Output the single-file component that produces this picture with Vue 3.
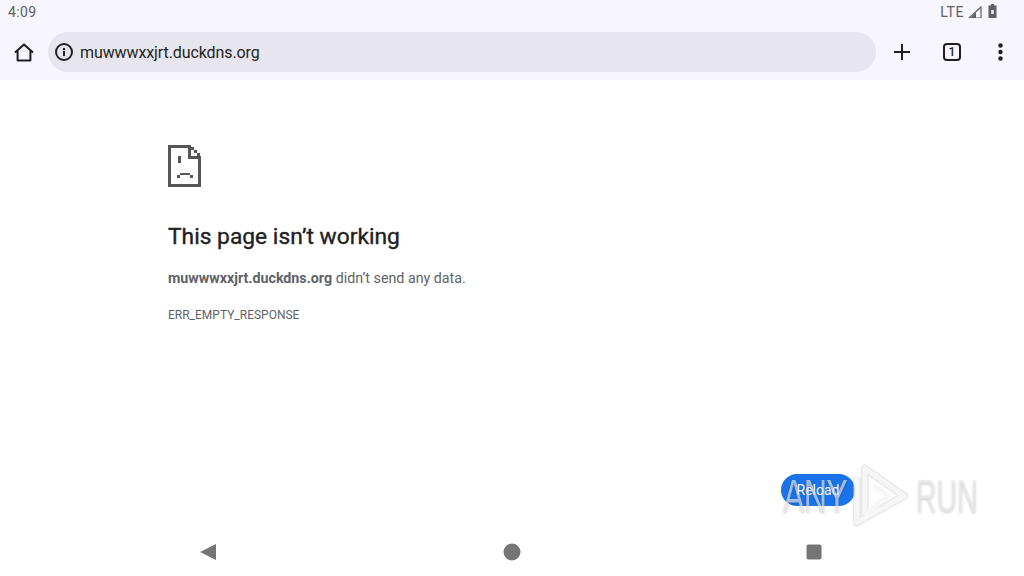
<script setup>
const host = 'muwwwxxjrt.duckdns.org'
</script>

<template>
  <div class="screen">
    <header class="chrome">
      <div class="status">
        <span class="time">4:09</span>
        <div class="status-right">
          <span class="lte">LTE</span>
          <svg width="14" height="12" viewBox="0 0 14 12"><path d="M13 1V12H1Z" fill="none" stroke="#5f6066" stroke-width="1.2"/><path d="M8 6V12H2.5L8 6Z" fill="#5f6066"/></svg>
          <svg class="battery" width="9" height="14" viewBox="0 0 9 14"><path d="M3 0H6V1.5H8.5V14H.5V1.5H3Z" fill="#5f6066"/><path d="M3.2 6H5.8V10H3.2Z" fill="#e8e8ee"/></svg>
        </div>
      </div>
      <div class="toolbar">
        <button class="tool home" aria-label="Home">
          <svg width="24" height="24" viewBox="0 0 24 24"><path d="M3 12.5 12 4.4l9 8.1M5.6 10.4V20.4H18.4V10.4" fill="none" stroke="#1f1f24" stroke-width="2" stroke-linejoin="round"/></svg>
        </button>
        <div class="omnibox">
          <svg width="20" height="20" viewBox="0 0 20 20"><circle cx="10" cy="10" r="8" fill="none" stroke="#1f1f24" stroke-width="2"/><rect x="9" y="9" width="2" height="5" fill="#1f1f24"/><rect x="9" y="6" width="2" height="2" fill="#1f1f24"/></svg>
          <span class="url">{{ host }}</span>
        </div>
        <div class="actions">
          <svg class="plus" width="18" height="18" viewBox="0 0 18 18"><path d="M9 1V17M1 9H17" stroke="#1f1f24" stroke-width="2"/></svg>
          <div class="tabs">1</div>
          <svg class="more" width="5" height="18" viewBox="0 0 5 18"><circle cx="2.5" cy="2.5" r="2.2" fill="#1f1f24"/><circle cx="2.5" cy="9" r="2.2" fill="#1f1f24"/><circle cx="2.5" cy="15.5" r="2.2" fill="#1f1f24"/></svg>
        </div>
      </div>
    </header>

    <main class="page">
      <svg class="sad" width="34" height="44" viewBox="0 0 34 44" shape-rendering="crispEdges" fill="#55565a">
        <path d="M0 1H22V4H3V40H30V14H33V43H0Z"/>
        <path d="M20 1H23V12H33V15H20Z"/>
        <path d="M23 3H26V6H23ZM26 6H29V9H26ZM29 9H32V12H29Z"/>
        <path d="M10 12H13V19H10Z"/>
        <path d="M12 29H22V31H12ZM9 31H12V34H9ZM22 31H25V34H22Z"/>
      </svg>
      <h1>This page isn’t working</h1>
      <p class="summary"><strong>{{ host }}</strong> didn’t send any data.</p>
      <p class="code">ERR_EMPTY_RESPONSE</p>
    </main>

    <button class="reload">Reload</button>

    <div class="watermark" aria-hidden="true">
      <span class="wm-any">ANY</span>
      <svg class="wm-logo" width="60" height="66" viewBox="0 0 60 66" fill="none" stroke-linejoin="round">
        <g stroke="#cfcfcf" stroke-width="8" opacity=".45">
          <path d="M6 14V60L54 33 14 5V52"/>
        </g>
        <g stroke="#f6f6f6" stroke-width="5">
          <path d="M6 14V60L54 33 14 5V52"/>
          <path d="M14 52 38 33 23 22"/>
        </g>
      </svg>
      <span class="wm-run">RUN</span>
    </div>

    <nav class="nav">
      <svg width="16" height="16" viewBox="0 0 16 16"><path d="M16 0V16L0 8Z" fill="#757575"/></svg>
      <svg class="nav-home" width="18" height="18" viewBox="0 0 18 18"><circle cx="9" cy="9" r="8.5" fill="#757575"/></svg>
      <svg class="nav-recent" width="16" height="16" viewBox="0 0 16 16"><rect x="0.5" y="0.5" width="15" height="15" rx="2" fill="#757575"/></svg>
    </nav>
  </div>
</template>

<style scoped>
.screen {
  position: relative;
  width: 1024px;
  height: 576px;
  overflow: hidden;
  background: #fff;
  font-family: Roboto, "Liberation Sans", sans-serif;
  display: flex;
  flex-direction: column;
}
.chrome { background: #f7f6fe; height: 80px; flex: none; }
.status {
  height: 24px;
  display: flex;
  align-items: center;
  justify-content: space-between;
  padding: 0 27px 0 8px;
  color: #5f6066;
  font-size: 14px;
}
.time { letter-spacing: 0.4px; }
.status-right { display: flex; align-items: center; gap: 4px; }
.lte { font-size: 14px; letter-spacing: 0.6px; }
.battery { margin-left: 2px; margin-top: -3px; }
.toolbar { height: 56px; display: flex; align-items: center; box-sizing: border-box; }
.tool { border: 0; background: none; padding: 0; width: 48px; display: flex; justify-content: center; }
.omnibox {
  width: 828px;
  height: 40px;
  box-sizing: border-box;
  border-radius: 20px;
  background: #e7e6ee;
  display: flex;
  align-items: center;
  gap: 6px;
  padding-left: 6px;
}
.url { font-size: 16px; letter-spacing: -0.1px; color: #1f1f24; }
.actions { flex: 1; display: flex; align-items: center; padding-left: 17px; }
.tabs {
  width: 14px;
  height: 14px;
  margin-left: 32px;
  border: 2px solid #1f1f24;
  border-radius: 4px;
  font-size: 12px;
  font-weight: 500;
  line-height: 14px;
  text-align: center;
  color: #1f1f24;
}
.more { margin-left: 37px; }
.page { padding: 64px 0 0 168px; flex: 1; }
.sad { display: block; margin-bottom: 34px; }
h1 { margin: 0; font-size: 22.8px; line-height: 30px; font-weight: 400; color: #202124; -webkit-text-stroke: .35px #202124; }
.summary { margin: 16px 0 0; font-size: 14.25px; line-height: 20px; color: #5f6368; }
.summary strong { font-weight: 700; }
.code { margin: 19px 0 0; font-size: 12px; line-height: 16px; color: #5f6368; }
.reload {
  position: absolute;
  left: 781px;
  top: 474px;
  width: 74px;
  height: 32px;
  border: 0;
  border-radius: 16px;
  background: #1a73e8;
  color: #fff;
  font: 400 14px Roboto, sans-serif;
  padding: 0;
}
.watermark {
  position: absolute;
  left: 783px;
  top: 463px;
  width: 193px;
  display: flex;
  align-items: center;
  justify-content: space-between;
  filter: blur(.6px);
  pointer-events: none;
}
.wm-any, .wm-run {
  font: 400 46px/66px "Liberation Sans", sans-serif;
  color: rgba(236, 236, 240, .65);
  text-shadow: 0 1px 3px rgba(0,0,0,.2);
  display: inline-block;
  width: 60px;
  white-space: nowrap;
  transform-origin: left;
}
.wm-logo { margin-left: 8px; margin-right: 6px; }
.wm-any { transform: scaleX(.7); letter-spacing: -1px; }
.wm-run { transform: scaleX(.62); }
.nav {
  position: absolute;
  left: 0;
  right: 0;
  bottom: 15px;
  height: 18px;
  display: flex;
  align-items: center;
  padding-left: 200px;
}
.nav-home { margin-left: 287px; }
.nav-recent { margin-left: 285px; }
</style>

<style>
html, body { margin: 0; background: #fff; }
</style>
